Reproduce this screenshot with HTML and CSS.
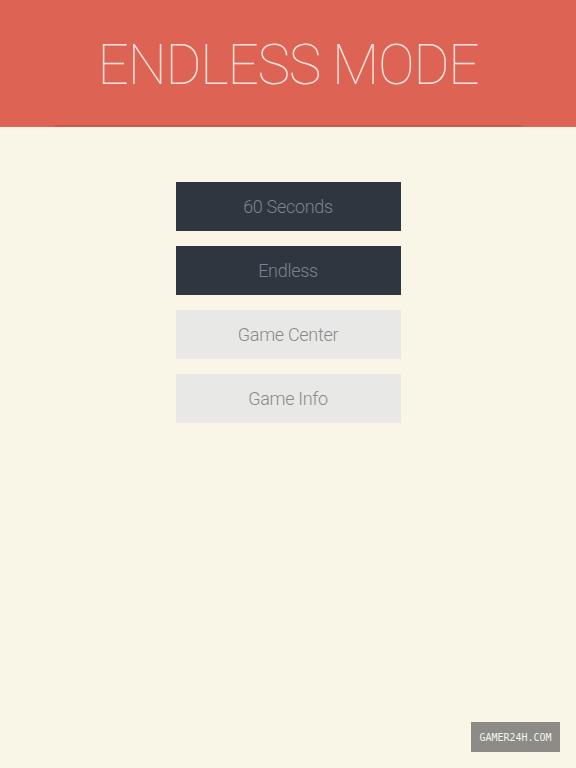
FILE: index.html
```html
<!DOCTYPE html>
<html>
<head>
<meta charset="utf-8">
<link rel="stylesheet" href="styles.css">
</head>
<body>
<header class="header">
  <h1 class="title">ENDLESS MODE</h1>
  <div class="header-line"></div>
</header>
<main class="menu">
  <button class="btn btn-dark">60 Seconds</button>
  <button class="btn btn-dark">Endless</button>
  <button class="btn btn-light">Game Center</button>
  <button class="btn btn-light">Game Info</button>
</main>
<div class="watermark">GAMER24H.COM</div>
</body>
</html>
```
FILE: styles.css
```css
html, body {
  margin: 0;
  padding: 0;
}
body {
  width: 576px;
  height: 768px;
  background: #f9f5e7;
  font-family: "Roboto", "Lato", sans-serif;
  position: relative;
  overflow: hidden;
}
.header {
  height: 127px;
  background: #dd6454;
  display: flex;
  flex-direction: column;
  align-items: center;
  box-sizing: border-box;
}
.title {
  margin: 0;
  padding-top: 33px;
  height: 94px;
  box-sizing: border-box;
  font-weight: 100;
  font-size: 55px;
  line-height: 64px;
  color: #fbe3da;
  letter-spacing: -1.2px;
}
.header-line {
  width: 467px;
  height: 2px;
  margin-top: auto;
  background: #c9594b;
}
.menu {
  display: flex;
  flex-direction: column;
  align-items: center;
  gap: 15px;
  padding-top: 55px;
}
.btn {
  width: 225px;
  height: 49px;
  border: none;
  margin: 0;
  padding: 0;
  font-family: "Roboto", "Lato", sans-serif;
  font-weight: 300;
  font-size: 18px;
  letter-spacing: -0.3px;
  cursor: pointer;
}
.btn-dark {
  background: #2f3640;
  color: #7d838c;
}
.btn-light {
  background: #e8e8e6;
  color: #8a8a8a;
}
.watermark {
  position: absolute;
  left: 471px;
  top: 722px;
  width: 89px;
  height: 30px;
  background: #8c8b85;
  color: #f4f4f0;
  font-family: "DejaVu Sans Mono", monospace;
  font-size: 10px;
  display: flex;
  align-items: center;
  justify-content: center;
}
```
